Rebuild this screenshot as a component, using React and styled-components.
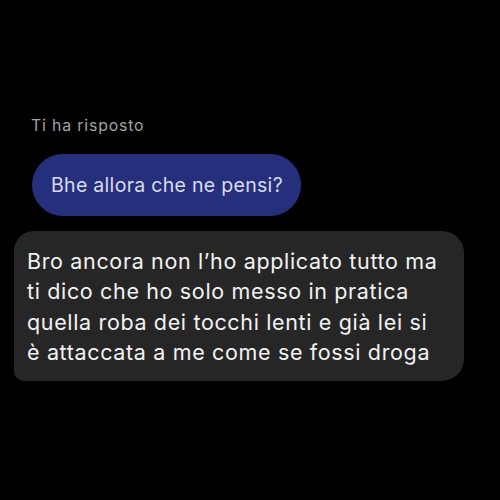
import React from "react";
import styled, { createGlobalStyle } from "styled-components";

const Global = createGlobalStyle`
  html, body { margin: 0; padding: 0; background: #000; }
  body { font-family: Inter, "Noto Sans", sans-serif; -webkit-font-smoothing: antialiased; }
`;

const Screen = styled.div`
  width: 500px;
  height: 500px;
  background: #000;
  display: flex;
  flex-direction: column;
  align-items: flex-start;
  padding-top: 116px;
  box-sizing: border-box;
`;

const ReplyLabel = styled.div`
  margin-left: 31px;
  font-size: 15.8px;
  letter-spacing: 0.85px;
  line-height: 20px;
  color: #a3a3a3;
`;

const ReplyBubble = styled.div`
  margin: 18px 0 0 32px;
  height: 62px;
  padding: 0 18px 0 19px;
  box-sizing: border-box;
  display: flex;
  align-items: center;
  border-radius: 31px;
  background: #262f7c;
  color: #d9dcec;
  font-size: 19.5px;
  letter-spacing: 0.3px;
`;

const MessageBubble = styled.div`
  margin: 15px 0 0 14px;
  width: 450px;
  box-sizing: border-box;
  padding: 15px 12px 14px 13px;
  background: #262626;
  border-radius: 20px 22px 22px 10px;
  color: #f2f2f2;
  font-size: 21.5px;
  letter-spacing: 0.65px;
  line-height: 30.25px;
`;

export default function App() {
  return (
    <>
      <Global />
      <Screen>
        <ReplyLabel>Ti ha risposto</ReplyLabel>
        <ReplyBubble>Bhe allora che ne pensi?</ReplyBubble>
        <MessageBubble>
          Bro ancora non l’ho applicato tutto ma
          <br />
          ti dico che ho solo messo in pratica
          <br />
          quella roba dei tocchi lenti e già lei si
          <br />
          è attaccata a me come se fossi droga
        </MessageBubble>
      </Screen>
    </>
  );
}
